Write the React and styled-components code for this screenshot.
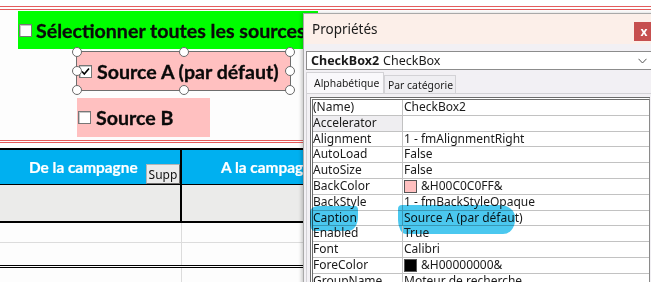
import React from "react";
import styled, { createGlobalStyle } from "styled-components";

const GlobalStyle = createGlobalStyle`
  html, body {
    margin: 0;
    padding: 0;
    background: #fdfdfd;
  }
  body {
    width: 651px;
    height: 282px;
    overflow: hidden;
  }
`;

const Screen = styled.div`
  position: relative;
  width: 651px;
  height: 282px;
  overflow: hidden;
  background: #fdfdfd;
  font-family: "Lato", "Liberation Sans", sans-serif;
`;

const Sheet = styled.div`
  display: flex;
  flex-direction: column;
  padding-top: 6px;
`;

const DoubleRule = styled.div`
  height: ${(p) => p.$gap}px;
  margin-top: ${(p) => p.$top || 0}px;
  border-top: 1px solid #e35a5a;
  border-bottom: 1px solid #e35a5a;
`;

const Banner = styled.div`
  display: flex;
  align-items: center;
  gap: 4px;
  width: 300px;
  height: 38px;
  margin: 1px 0 0 18px;
  padding-left: 1px;
  box-sizing: border-box;
  background: #00ff00;
`;

const Control = styled.div`
  position: relative;
  display: flex;
  align-items: center;
  gap: 5px;
  width: ${(p) => p.$w}px;
  height: ${(p) => p.$h}px;
  margin: ${(p) => p.$top}px 0 0 ${(p) => p.$left}px;
  padding-left: ${(p) => p.$pad}px;
  box-sizing: border-box;
  background: #ffc0c0;
  border: ${(p) => (p.$selected ? "1px solid #6e6e6e" : "none")};
`;

const Caption = styled.span`
  font-size: 19.6px;
  font-weight: 700;
  color: #0a0a0a;
  white-space: nowrap;
  -webkit-text-stroke: 0.3px #0a0a0a;
`;

const Box = styled.span`
  display: inline-flex;
  align-items: center;
  justify-content: center;
  flex: none;
  width: 11px;
  height: 11px;
  background: #fff;
  border: 1px solid #777;
  box-shadow: inset 1px 1px 0 #c8c8c8;
`;

const Handle = styled.span`
  position: absolute;
  width: 8px;
  height: 8px;
  border-radius: 50%;
  background: #fff;
  border: 1.5px solid #6a6a6a;
  left: ${(p) => p.$x};
  top: ${(p) => p.$y};
  transform: translate(-50%, -50%);
`;

const Table = styled.div`
  margin-top: 5px;
  border-top: 2px solid #000;
`;

const Row = styled.div`
  display: flex;
  height: ${(p) => p.$h}px;
  background: ${(p) => p.$bg};
  border-bottom: ${(p) => p.$line};
`;

const Cell = styled.div`
  display: flex;
  align-items: center;
  box-sizing: border-box;
  flex: ${(p) => (p.$w ? "none" : "1")};
  width: ${(p) => (p.$w ? `${p.$w}px` : "auto")};
  padding-left: ${(p) => p.$pad || 0}px;
  border-right: ${(p) => p.$line || "none"};
`;

const HeadText = styled.span`
  color: #fff;
  font-size: 15.4px;
  font-weight: 700;
  white-space: nowrap;
  -webkit-text-stroke: 0.2px #fff;
`;

const SuppButton = styled.button`
  align-self: flex-end;
  margin-left: auto;
  width: 34px;
  height: 20px;
  padding: 0;
  background: #ebebeb;
  border: 1px solid #b5b5b5;
  border-right-color: #6f6f6f;
  border-bottom-color: #6f6f6f;
  font-family: "Noto Sans", sans-serif;
  font-size: 12px;
  color: #111;
`;

/* properties window */
const Window = styled.div`
  position: absolute;
  left: 303px;
  top: 13px;
  right: -10px;
  bottom: -10px;
  display: flex;
  flex-direction: column;
  background: #f2f0f4;
  border: 1px solid #a9a9a9;
  box-shadow: -2px 0 3px rgba(0, 0, 0, 0.18);
  font-family: "Noto Sans", sans-serif;
  color: #1a1a1a;
`;

const TitleBar = styled.div`
  display: flex;
  align-items: center;
  height: 30px;
  padding-left: 8px;
  background: #fcefe9;
  font-size: 13.5px;
`;

const CloseButton = styled.div`
  align-self: flex-start;
  display: flex;
  align-items: center;
  justify-content: center;
  margin: 8px 6px 0 auto;
  width: 20px;
  height: 19px;
  background: #c64f4f;
  color: #fff;
  font-size: 12px;
  font-weight: 700;
`;

const ObjectSelect = styled.div`
  display: flex;
  align-items: center;
  height: 19px;
  margin: 7px 3px 0 2px;
  padding: 0 9px 0 4px;
  box-sizing: border-box;
  background: #fff;
  border: 1px solid #8c8c8c;
  font-size: 12.5px;
  white-space: nowrap;
`;

const Strong = styled.b`
  font-weight: 700;
  margin-right: 4px;
`;

const Chevron = styled.svg`
  margin-left: auto;
`;

const Tabs = styled.div`
  display: flex;
  align-items: flex-end;
  margin: 2px 0 0 2px;
  height: 21px;
`;

const Tab = styled.div`
  display: flex;
  align-items: center;
  width: ${(p) => p.$w}px;
  height: ${(p) => (p.$active ? 21 : 18)}px;
  padding-left: ${(p) => (p.$active ? 7 : 3)}px;
  box-sizing: border-box;
  background: ${(p) => (p.$active ? "#f9f8fb" : "#efeef2")};
  border: 1px solid #d3d2d6;
  border-bottom: none;
  font-size: 10.4px;
  white-space: nowrap;
`;

const TabBody = styled.div`
  flex: 1;
  margin-left: 2px;
  padding: 3px 10px 0 3px;
  border-left: 1px solid #d3d2d6;
  border-top: 1px solid #d3d2d6;
`;

const Grid = styled.div`
  background: #fff;
  border-top: 3px double #6c6c6c;
  border-left: 3px double #6c6c6c;
  border-right: 1px solid #8a8a8a;
`;

const PropRow = styled.div`
  position: relative;
  display: flex;
  height: 15.8px;
  box-sizing: border-box;
  border-bottom: 1px solid #c2c2c2;
  font-size: 12px;
  line-height: 14.8px;
`;

const PropName = styled.div`
  width: 89px;
  flex: none;
  border-right: 1px solid #c2c2c2;
  background: ${(p) => (p.$hi ? "#efeef1" : "transparent")};
  white-space: nowrap;
`;

const PropValue = styled.div`
  display: flex;
  align-items: center;
  gap: 4px;
  padding-left: 1px;
  white-space: nowrap;
`;

const Swatch = styled.span`
  width: 11px;
  height: 11px;
  background: ${(p) => p.$color};
  border: 1px solid #555;
`;

const Marker = styled.span`
  position: absolute;
  left: ${(p) => p.$x}px;
  top: ${(p) => p.$y}px;
  width: ${(p) => p.$w}px;
  height: ${(p) => p.$h}px;
  background: #4bc8ef;
  mix-blend-mode: multiply;
  border-radius: ${(p) => p.$r};
  pointer-events: none;
`;

const Check = () => (
  <svg width="9" height="9" viewBox="0 0 9 9">
    <path d="M1 4.5 L3.3 7 L8 1.5" fill="none" stroke="#000" strokeWidth="1.6" />
  </svg>
);

const props = [
  ["(Name)", "CheckBox2"],
  ["Accelerator", "", { hi: true }],
  ["Alignment", "1 - fmAlignmentRight"],
  ["AutoLoad", "False"],
  ["AutoSize", "False"],
  ["BackColor", "&H00C0C0FF&", { swatch: "#ffc0c0" }],
  ["BackStyle", "1 - fmBackStyleOpaque"],
  ["Caption", "Source A (par défaut)", { marked: true }],
  ["Enabled", "True"],
  ["Font", "Calibri"],
  ["ForeColor", "&H00000000&", { swatch: "#000" }],
  ["GroupName", "Moteur de recherche"],
];

const handles = [
  ["0%", "0%"],
  ["50%", "0%"],
  ["100%", "0%"],
  ["0%", "50%"],
  ["100%", "50%"],
  ["0%", "100%"],
  ["50%", "100%"],
  ["100%", "100%"],
];

export default function App() {
  return (
    <Screen>
      <GlobalStyle />
      <Sheet>
        <DoubleRule $gap={2} />
        <Banner>
          <Box />
          <Caption>Sélectionner toutes les sources</Caption>
        </Banner>
        <Control $selected $w={215} $h={40} $top={2} $left={76} $pad={2}>
          <Box>
            <Check />
          </Box>
          <Caption>Source A (par défaut)</Caption>
          {handles.map(([x, y], i) => (
            <Handle key={i} $x={x} $y={y} />
          ))}
        </Control>
        <Control $w={133} $h={39} $top={7} $left={77} $pad={1}>
          <Box />
          <Caption>Source B</Caption>
        </Control>
        <DoubleRule $gap={1} $top={3} />
        <Table>
          <Row $h={34} $bg="#00b0f0" $line="1px solid #000">
            <Cell $w={182} $pad={29} $line="2px solid #000">
              <HeadText>De la campagne</HeadText>
              <SuppButton>Supp</SuppButton>
            </Cell>
            <Cell $pad={39}>
              <HeadText>A la campagne</HeadText>
            </Cell>
          </Row>
          <Row $h={36} $bg="#ebebea" $line="2px solid #000">
            <Cell $w={182} $line="2px solid #000" />
            <Cell />
          </Row>
          <Row $h={19} $bg="#fdfdfd" $line="1px solid #dcdcdc">
            <Cell $w={182} $line="1px solid #dcdcdc" />
            <Cell />
          </Row>
          <Row $h={22} $bg="#fdfdfd" $line="3px double #000">
            <Cell $w={182} $line="1px solid #dcdcdc" />
            <Cell />
          </Row>
          <Row $h={20} $bg="#fdfdfd" $line="none">
            <Cell $w={182} $line="1px solid #dcdcdc" />
            <Cell />
          </Row>
        </Table>
      </Sheet>

      <Window>
        <TitleBar>
          Propriétés
          <CloseButton>x</CloseButton>
        </TitleBar>
        <ObjectSelect>
          <Strong>CheckBox2</Strong>CheckBox
          <Chevron width="9" height="6" viewBox="0 0 9 6">
            <path d="M0.5 0.8 L4.5 5 L8.5 0.8" fill="none" stroke="#555" strokeWidth="1" />
          </Chevron>
        </ObjectSelect>
        <Tabs>
          <Tab $active $w={78}>Alphabétique</Tab>
          <Tab $w={72}>Par catégorie</Tab>
        </Tabs>
        <TabBody>
          <Grid>
            {props.map(([name, value, opt = {}]) => (
              <PropRow key={name}>
                <PropName $hi={opt.hi}>{name}</PropName>
                <PropValue>
                  {opt.swatch && <Swatch $color={opt.swatch} />}
                  {value}
                </PropValue>
                {opt.marked && (
                  <>
                    <Marker $x={-3} $y={-5} $w={48} $h={25} $r="8px 3px 10px 4px / 6px 4px 14px 8px" />
                    <Marker $x={85} $y={-6} $w={117} $h={29} $r="4px 16px 12px 8px / 4px 12px 14px 14px" />
                  </>
                )}
              </PropRow>
            ))}
          </Grid>
        </TabBody>
      </Window>
    </Screen>
  );
}
